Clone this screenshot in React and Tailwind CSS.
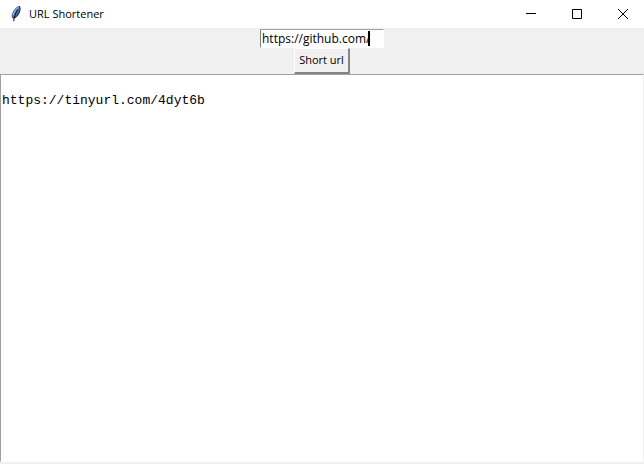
import { useState } from "react";

function FeatherIcon() {
  return (
    <svg width="16" height="18" viewBox="0 0 16 18" aria-hidden="true">
      <path d="M11.500 1.200C8.500 2 5.300 5.800 4.300 9.400c-.4 1.600-.2 3 .5 3.900 2.600-.8 5.300-3.300 6.400-6.300.8-2.400.9-4.300.3-5.800z" fill="#4d78b0" />
      <path d="M10.500 2C7.800 3.500 5.600 6.500 4.800 10" fill="none" stroke="#9dbbe0" strokeWidth="1.800" />
      <path d="M11.500 1.200c.9 1.800.7 4-.2 6.100-1.200 2.800-3.700 5.200-6.300 6" fill="none" stroke="#1b2a44" strokeWidth="1.200" />
      <path d="M11.200 1.200C8.200 2.400 5.200 6 4.200 9.500c-.3 1.400-.2 2.500.2 3.400" fill="none" stroke="#3c4c66" strokeWidth=".7" />
      <path d="M9.800 4.500C7.600 8 6.200 12 5.600 16.200" fill="none" stroke="#0b1220" strokeWidth="1" />
    </svg>
  );
}

function CaptionButton({ label, children }) {
  return (
    <button type="button" aria-label={label} className="flex h-7 w-[46px] items-center justify-center pl-1">
      <svg width="12" height="12" viewBox="0 0 12 12" fill="none" stroke="#000" aria-hidden="true">
        {children}
      </svg>
    </button>
  );
}

export default function App() {
  const [url, setUrl] = useState("https://github.com/");
  const [result, setResult] = useState("\nhttps://tinyurl.com/4dyt6b");

  return (
    <div className="flex min-h-screen flex-col bg-[#f0f0f0] font-['Open_Sans','Noto_Sans',sans-serif] text-[11px] text-black">
      <header className="flex h-7 items-center bg-white pl-2">
        <FeatherIcon />
        <h1 className="ml-[5px] flex-1">URL Shortener</h1>
        <div className="flex">
          <CaptionButton label="Minimize">
            <path d="M1 5.500h10" />
          </CaptionButton>
          <CaptionButton label="Maximize">
            <path d="M1.500 1.500h9v9h-9z" />
          </CaptionButton>
          <CaptionButton label="Close">
            <path d="M1 1l10 10M11 1L1 11" />
          </CaptionButton>
        </div>
      </header>
      <main className="flex flex-1 flex-col items-center pb-0.5">
        <div className="relative mt-px">
          <input
            type="text"
            aria-label="URL"
            value={url}
            onChange={(e) => setUrl(e.target.value)}
            className="block h-[19px] w-[124px] border border-t-[#a0a0a0] border-r-white border-b-white border-l-[#808080] bg-white px-px text-xs outline-none"
          />
          <span aria-hidden="true" className="absolute top-0.5 left-[108px] h-[15px] w-0.5 bg-black" />
        </div>
        <button
          type="button"
          className="h-[26px] w-14 border-t border-r-2 border-b-2 border-l border-t-white border-r-[#858585] border-b-[#858585] border-l-white bg-[#f0f0f0] whitespace-nowrap"
        >
          Short url
        </button>
        <textarea
          aria-label="Shortened URL"
          value={result}
          onChange={(e) => setResult(e.target.value)}
          className="w-full flex-1 resize-none border border-t-[#a0a0a0] border-r-[#f0f0f0] border-b-white border-l-[#a0a0a0] bg-white px-px pt-0.5 font-['Liberation_Mono',monospace] text-[13px] leading-4 outline-none"
        />
      </main>
    </div>
  );
}
